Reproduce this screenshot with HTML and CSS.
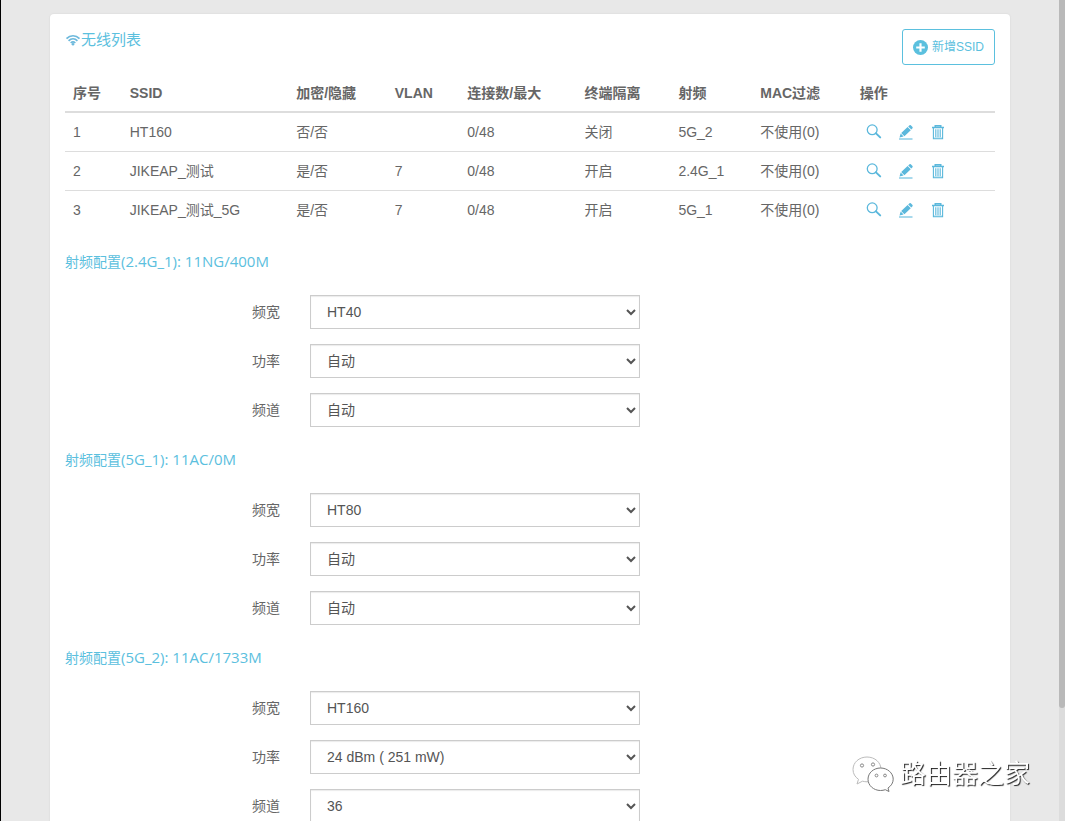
FILE: index.html
```
<!DOCTYPE html>
<html lang="zh-CN">
<head>
<meta charset="utf-8">
<title>无线列表</title>
<link rel="stylesheet" href="styles.css">
</head>
<body>
<svg class="sprite" aria-hidden="true">
  <symbol id="search" viewBox="0 0 16 16"><circle cx="6.2" cy="5.8" r="4.9" fill="none" stroke="currentColor" stroke-width="1.3"/><path d="M10 9.400l4.200 4" stroke="currentColor" stroke-width="2" stroke-linecap="round"/></symbol>
  <symbol id="edit" viewBox="0 0 16 16"><path d="M1.500 13.600l1.200-4 2.900 2.900zM3.200 9l6.400-6 3.200 3.200-6.400 6zM10.200 2.400l1.300-1.200q.7-.5 1.300 0l1.700 1.700q.5.700 0 1.300L13.300 5.500z" fill="currentColor"/><path d="M1 15h13.500" stroke="currentColor" stroke-width="1.400" opacity=".75"/></symbol>
  <symbol id="trash" viewBox="0 0 16 16"><path d="M5.200 3V1.700h5.600V3M2 3.500h12" fill="none" stroke="currentColor" stroke-width="1.400"/><path d="M3.400 3.500v11.200h9.200V3.500M5.800 5.300v8M8 5.300v8M10.200 5.300v8" fill="none" stroke="currentColor" stroke-width="1.100"/><path d="M3 13h10v2H3z" fill="currentColor" opacity=".3"/></symbol>
</svg>
<div class="viewport">
  <main class="card">
    <header class="card-head">
      <h1 class="title"><svg class="wifi" viewBox="0 0 15 12" aria-hidden="true"><g fill="none" stroke="currentColor" stroke-width="1.700"><path d="M1 4.600c3.700-3.800 9.300-3.800 13 0M3.100 6.900c2.600-2.600 6.200-2.600 8.800 0M5.200 9c1.400-1.300 3.200-1.300 4.600 0"/></g><circle cx="7.500" cy="10.300" r="1.300" fill="currentColor"/></svg>无线列表</h1>
      <button class="add" type="button"><svg class="plus" viewBox="0 0 14 14" aria-hidden="true"><circle cx="7" cy="7" r="7" fill="currentColor"/><path d="M7 3v8M3 7h8" stroke="#fff" stroke-width="2"/></svg>新增SSID</button>
    </header>
    <table class="list">
      <colgroup><col class="c-no"><col class="c-ssid"><col class="c-enc"><col class="c-vlan"><col class="c-conn"><col class="c-iso"><col class="c-rf"><col class="c-mac"><col class="c-op"></colgroup>
      <thead><tr><th>序号</th><th>SSID</th><th>加密/隐藏</th><th>VLAN</th><th>连接数/最大</th><th>终端隔离</th><th>射频</th><th>MAC过滤</th><th>操作</th></tr></thead>
      <tbody>
        <tr><td>1</td><td>HT160</td><td>否/否</td><td></td><td>0/48</td><td>关闭</td><td>5G_2</td><td>不使用(0)</td><td><div class="ops"><button class="op" type="button" aria-label="查看"><svg><use href="#search"/></svg></button><button class="op" type="button" aria-label="编辑"><svg><use href="#edit"/></svg></button><button class="op" type="button" aria-label="删除"><svg><use href="#trash"/></svg></button></div></td></tr>
        <tr><td>2</td><td>JIKEAP_测试</td><td>是/否</td><td>7</td><td>0/48</td><td>开启</td><td>2.4G_1</td><td>不使用(0)</td><td><div class="ops"><button class="op" type="button" aria-label="查看"><svg><use href="#search"/></svg></button><button class="op" type="button" aria-label="编辑"><svg><use href="#edit"/></svg></button><button class="op" type="button" aria-label="删除"><svg><use href="#trash"/></svg></button></div></td></tr>
        <tr><td>3</td><td>JIKEAP_测试_5G</td><td>是/否</td><td>7</td><td>0/48</td><td>开启</td><td>5G_1</td><td>不使用(0)</td><td><div class="ops"><button class="op" type="button" aria-label="查看"><svg><use href="#search"/></svg></button><button class="op" type="button" aria-label="编辑"><svg><use href="#edit"/></svg></button><button class="op" type="button" aria-label="删除"><svg><use href="#trash"/></svg></button></div></td></tr>
      </tbody>
    </table>

    <section class="radio">
      <h2 class="radio-title"><span class="name">射频配置</span>(2.4G_1): 11NG/400M</h2>
      <div class="field"><label for="w1">频宽</label><select id="w1"><option>HT40</option></select></div>
      <div class="field"><label for="p1">功率</label><select id="p1"><option>自动</option></select></div>
      <div class="field"><label for="c1">频道</label><select id="c1"><option>自动</option></select></div>
    </section>
    <section class="radio">
      <h2 class="radio-title"><span class="name">射频配置</span>(5G_1): 11AC/0M</h2>
      <div class="field"><label for="w2">频宽</label><select id="w2"><option>HT80</option></select></div>
      <div class="field"><label for="p2">功率</label><select id="p2"><option>自动</option></select></div>
      <div class="field"><label for="c2">频道</label><select id="c2"><option>自动</option></select></div>
    </section>
    <section class="radio">
      <h2 class="radio-title"><span class="name">射频配置</span>(5G_2): 11AC/1733M</h2>
      <div class="field"><label for="w3">频宽</label><select id="w3"><option>HT160</option></select></div>
      <div class="field"><label for="p3">功率</label><select id="p3"><option>24 dBm ( 251 mW)</option></select></div>
      <div class="field"><label for="c3">频道</label><select id="c3"><option>36</option></select></div>
    </section>
  </main>
  <div class="track" aria-hidden="true"><div class="thumb"></div></div>
</div>
<div class="watermark">
  <svg class="wechat" viewBox="0 0 42 36" aria-hidden="true"><g fill="#fff" stroke-width="1"><path stroke="#bbb" d="M15 1C7 1 1 6.500 1 13.500c0 4 2 7.500 5.500 9.800L5 28l5.500-2.800c1.500.4 3 .6 4.500.6 8 0 14-5.300 14-12.300S23 1 15 1z"/><path stroke="#777" d="M28.500 12C21.500 12 16 17 16 23.200s5.500 11.300 12.500 11.300c1.700 0 3.400-.3 4.800-.8l3.700 1.800-1-3.500c3.200-2.100 5.200-5.200 5.200-8.800C41.200 17 35.500 12 28.500 12z"/></g><g fill="#fff" stroke="#888"><circle cx="10" cy="9.500" r="1.600"/><circle cx="21" cy="8.500" r="1.600"/><circle cx="24.500" cy="19.500" r="1.400"/><circle cx="33" cy="19.500" r="1.400"/></g></svg>
  <span>路由器之家</span>
</div>
</body>
</html>
```
FILE: styles.css
```
* { box-sizing: border-box; }
body {
  margin: 0;
  background: #e8e8e8;
  color: #666;
  font: 14px/20px "Liberation Sans", "Noto Sans CJK SC", sans-serif;
}
.sprite { position: absolute; width: 0; height: 0; }
.viewport {
  display: flex;
  height: 100vh;
  overflow: hidden;
  border-left: 1px solid #000;
}
.card {
  flex: 1;
  align-self: flex-start;
  margin: 14px 49px 0;
  padding: 15px;
  background: #fff;
  border-radius: 4px;
  box-shadow: 0 0 1px 1px #e1e1e1;
}
.card-head {
  display: flex;
  justify-content: space-between;
  align-items: flex-start;
  margin-bottom: 10px;
}
.title {
  display: flex;
  align-items: center;
  margin: 0;
  color: #5bc0de;
  font-size: 15px;
  line-height: 22px;
  font-weight: 400;
}
.wifi { width: 16px; height: 12px; color: #6db9dc; }
.add {
  display: flex;
  align-items: center;
  gap: 4px;
  height: 36px;
  padding: 0 10px;
  border: 1px solid #5bc0de;
  border-radius: 3px;
  background: #fff;
  color: #5bc0de;
  font: inherit;
  font-size: 12px;
}
.plus { width: 15px; height: 15px; }
.list {
  width: 100%;
  table-layout: fixed;
  border-spacing: 0;
}
.c-no { width: 6.1%; }
.c-ssid { width: 17.9%; }
.c-enc { width: 10.6%; }
.c-vlan { width: 7.8%; }
.c-conn { width: 12.6%; }
.c-iso { width: 10.1%; }
.c-rf { width: 8.8%; }
.c-mac { width: 10.7%; }
.list th, .list td { padding: 8px; text-align: left; }
.list td { line-height: 22px; border-bottom: 1px solid #ddd; }
.list tbody tr:last-child td { border-bottom: 0; }
.list th { border-bottom: 2px solid #ddd; }
.ops { display: flex; gap: 16px; padding-left: 6px; }
.op {
  display: flex;
  align-items: center;
  height: 22px;
  padding: 0;
  border: 0;
  background: none;
  color: #5bb8dc;
}
.op svg { width: 16px; height: 16px; }
.radio { padding-top: 22px; }
.radio-title {
  margin: 0 0 24px;
  color: #5bc0de;
  font-family: "Open Sans", "Noto Sans CJK SC", sans-serif;
  font-size: 15px;
  font-weight: 400;
  line-height: 20px;
}
.name { font-size: 14px; line-height: 14px; }
.field {
  display: grid;
  grid-template-columns: 215fr 330fr 325fr;
  column-gap: 30px;
  align-items: center;
}
.field + .field { margin-top: 15px; }
.field label { text-align: right; }
.field select {
  width: 100%;
  height: 34px;
  padding: 0 0 0 12px;
  border: 1px solid #ccc;
  border-radius: 0;
  background: #fff;
  box-shadow: inset 0 1px 1px #ececec;
  color: #555;
  font: inherit;
}
.track { width: 6px; background: #dcdcdc; }
.thumb {
  height: 86.2%;
  border-radius: 0 0 3px 3px;
  background: #b9b9b9;
}
.watermark {
  position: fixed;
  right: 35px;
  bottom: 28px;
  display: flex;
  align-items: center;
  gap: 6px;
  color: #fff;
  font-size: 26px;
  line-height: 38px;
  text-shadow: 1px 1px 1px #222;
}
.wechat { width: 42px; height: 36px; }
```
